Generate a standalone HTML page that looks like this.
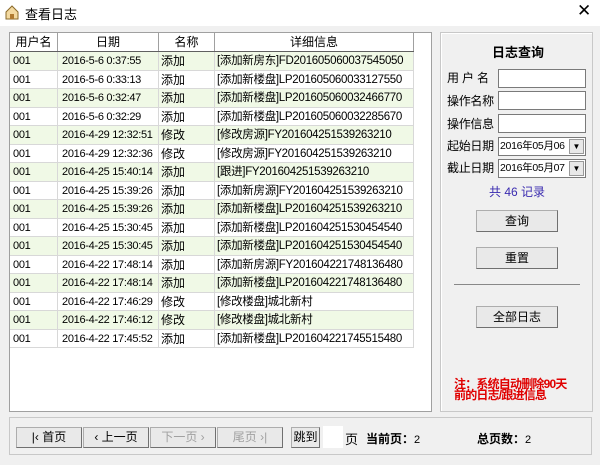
<!DOCTYPE html>
<html><head><meta charset="utf-8"><style>
*{margin:0;padding:0;box-sizing:border-box}
body{width:600px;height:465px;background:#f0f0f0;font-family:"Liberation Sans","Noto Sans CJK SC",sans-serif;font-size:12px;color:#000;position:relative;overflow:hidden}
.a{position:absolute}
.title{left:0;top:0;width:600px;height:26px;background:#fff}
.grid{left:9px;top:32px;width:423px;height:380px;background:#fff;border:1px solid #a0a0a0}
.row{position:absolute;left:0;height:18.5px;width:404px;border-bottom:1px solid #d8d8d8}
.row span,.hd span{position:absolute;top:0;height:100%;line-height:18px;border-right:1px solid #d8d8d8;white-space:nowrap;overflow:hidden}
.row span{font-size:11px;letter-spacing:-0.3px}
.row span.c3{font-size:12px;letter-spacing:0}
.row span.c4{font-size:11.5px;letter-spacing:-0.3px}
.hd{position:absolute;left:0;top:0;height:19px;width:404px;border-bottom:1px solid #606060;background:#fff}
.hd span{text-align:center;border-right:1px solid #a0a0a0}
.c1{left:0;width:48px;padding-left:3px}
.c2{left:48px;width:101px;padding-left:4px}
.c3{left:149px;width:56px;padding-left:2px}
.c4{left:205px;width:199px;padding-left:2px}
.g{background:#f0f9e6}
.panel{left:440px;top:32px;width:153px;height:380px;border:1px solid #c8c8c8;box-shadow:inset 1px 1px 0 #fff}
.lbl{left:447px;font-size:12px;letter-spacing:-0.3px}
.inp{left:498px;width:88px;height:19px;background:#fff;border:1px solid #7a7a7a}
.btn{background:#e9e9e9;border:1px solid #adadad;border-right-color:#707070;border-bottom-color:#707070;text-align:center;line-height:20px;font-size:12px}
.dd{font-size:10.5px;padding-left:1px;line-height:17px;letter-spacing:-0.3px;white-space:nowrap;overflow:hidden}
.dd i{position:absolute;right:1px;top:1px;width:15px;height:15px;background:#e8e8e8;border:1px solid #999;font-style:normal;font-size:8px;text-align:center;line-height:14px;letter-spacing:0}
.bp{left:9px;top:417px;width:583px;height:38px;border:1px solid #c8c8c8}
.pb{top:427px;height:21px;line-height:19px;font-size:12px}
</style></head><body>
<div class="a title"></div>
<svg class="a" style="left:5px;top:5px" width="14" height="15" viewBox="0 0 14 15"><path d="M1 7L7 1l6 6v7H1z" fill="#f3d9a0" stroke="#8a6a2a"/><rect x="5" y="9" width="4" height="5" fill="#b07a30"/></svg>
<div class="a" style="left:25px;top:4px;font-size:13px">查看日志</div>
<div class="a" style="left:577px;top:1px;font-size:17px">✕</div>
<div class="a grid">
<div class="hd"><span class="c1" style="padding:0">用户名</span><span class="c2" style="padding:0">日期</span><span class="c3" style="padding:0">名称</span><span class="c4" style="padding:0">详细信息</span></div>
<div class="row g" style="top:19px"><span class="c1">001</span><span class="c2">2016-5-6 0:37:55</span><span class="c3">添加</span><span class="c4">[添加新房东]FD201605060037545050</span></div>
<div class="row" style="top:37.5px"><span class="c1">001</span><span class="c2">2016-5-6 0:33:13</span><span class="c3">添加</span><span class="c4">[添加新楼盘]LP201605060033127550</span></div>
<div class="row g" style="top:56px"><span class="c1">001</span><span class="c2">2016-5-6 0:32:47</span><span class="c3">添加</span><span class="c4">[添加新楼盘]LP201605060032466770</span></div>
<div class="row" style="top:74.5px"><span class="c1">001</span><span class="c2">2016-5-6 0:32:29</span><span class="c3">添加</span><span class="c4">[添加新楼盘]LP201605060032285670</span></div>
<div class="row g" style="top:93px"><span class="c1">001</span><span class="c2">2016-4-29 12:32:51</span><span class="c3">修改</span><span class="c4">[修改房源]FY201604251539263210</span></div>
<div class="row" style="top:111.5px"><span class="c1">001</span><span class="c2">2016-4-29 12:32:36</span><span class="c3">修改</span><span class="c4">[修改房源]FY201604251539263210</span></div>
<div class="row g" style="top:130px"><span class="c1">001</span><span class="c2">2016-4-25 15:40:14</span><span class="c3">添加</span><span class="c4">[跟进]FY201604251539263210</span></div>
<div class="row" style="top:148.5px"><span class="c1">001</span><span class="c2">2016-4-25 15:39:26</span><span class="c3">添加</span><span class="c4">[添加新房源]FY201604251539263210</span></div>
<div class="row g" style="top:167px"><span class="c1">001</span><span class="c2">2016-4-25 15:39:26</span><span class="c3">添加</span><span class="c4">[添加新楼盘]LP201604251539263210</span></div>
<div class="row" style="top:185.5px"><span class="c1">001</span><span class="c2">2016-4-25 15:30:45</span><span class="c3">添加</span><span class="c4">[添加新楼盘]LP201604251530454540</span></div>
<div class="row g" style="top:204px"><span class="c1">001</span><span class="c2">2016-4-25 15:30:45</span><span class="c3">添加</span><span class="c4">[添加新楼盘]LP201604251530454540</span></div>
<div class="row" style="top:222.5px"><span class="c1">001</span><span class="c2">2016-4-22 17:48:14</span><span class="c3">添加</span><span class="c4">[添加新房源]FY201604221748136480</span></div>
<div class="row g" style="top:241px"><span class="c1">001</span><span class="c2">2016-4-22 17:48:14</span><span class="c3">添加</span><span class="c4">[添加新楼盘]LP201604221748136480</span></div>
<div class="row" style="top:259.5px"><span class="c1">001</span><span class="c2">2016-4-22 17:46:29</span><span class="c3">修改</span><span class="c4">[修改楼盘]城北新村</span></div>
<div class="row g" style="top:278px"><span class="c1">001</span><span class="c2">2016-4-22 17:46:12</span><span class="c3">修改</span><span class="c4">[修改楼盘]城北新村</span></div>
<div class="row" style="top:296.5px"><span class="c1">001</span><span class="c2">2016-4-22 17:45:52</span><span class="c3">添加</span><span class="c4">[添加新楼盘]LP201604221745515480</span></div>
</div>
<div class="a panel"></div>
<div class="a" style="left:492px;top:42px;font-weight:bold;font-size:13px">日志查询</div>
<div class="a lbl" style="top:69px;letter-spacing:3px">用户名</div><div class="a inp" style="top:69px"></div>
<div class="a lbl" style="top:92px">操作名称</div><div class="a inp" style="top:91px"></div>
<div class="a lbl" style="top:115px">操作信息</div><div class="a inp" style="top:114px"></div>
<div class="a lbl" style="top:137px">起始日期</div><div class="a inp dd" style="top:137px">2016年05月06<i>▼</i></div>
<div class="a lbl" style="top:159px">截止日期</div><div class="a inp dd" style="top:159px">2016年05月07<i>▼</i></div>
<div class="a" style="left:489px;top:183px;color:#3a2bb0">共 46 记录</div>
<div class="a btn" style="left:476px;top:210px;width:82px;height:22px">查询</div>
<div class="a btn" style="left:476px;top:247px;width:82px;height:22px">重置</div>
<div class="a" style="left:454px;top:284px;width:126px;height:1px;background:#888"></div>
<div class="a btn" style="left:476px;top:306px;width:82px;height:22px">全部日志</div>
<div class="a" style="left:454px;top:379px;color:#e00000;font-weight:bold;font-size:12px;line-height:11px;letter-spacing:-0.8px">注：系统自动删除90天<br>前的日志/跟进信息</div>
<div class="a bp"></div>
<div class="a btn pb" style="left:16px;width:66px">|‹ 首页</div>
<div class="a btn pb" style="left:83px;width:66px">‹ 上一页</div>
<div class="a btn pb" style="left:150px;width:66px;color:#a0a0a0">下一页 ›</div>
<div class="a btn pb" style="left:217px;width:66px;color:#a0a0a0">尾页 ›|</div>
<div class="a btn pb" style="left:291px;width:29px">跳到</div>
<div class="a" style="left:323px;top:426px;width:20px;height:22px;background:#fff"></div>
<div class="a" style="left:345px;top:429px;font-size:13px">页</div>
<div class="a" style="left:366px;top:430px;font-weight:bold">当前页：<span style="font-weight:normal;font-size:11px">2</span></div>
<div class="a" style="left:477px;top:430px;font-weight:bold">总页数：<span style="font-weight:normal;font-size:11px">2</span></div>
</body></html>
